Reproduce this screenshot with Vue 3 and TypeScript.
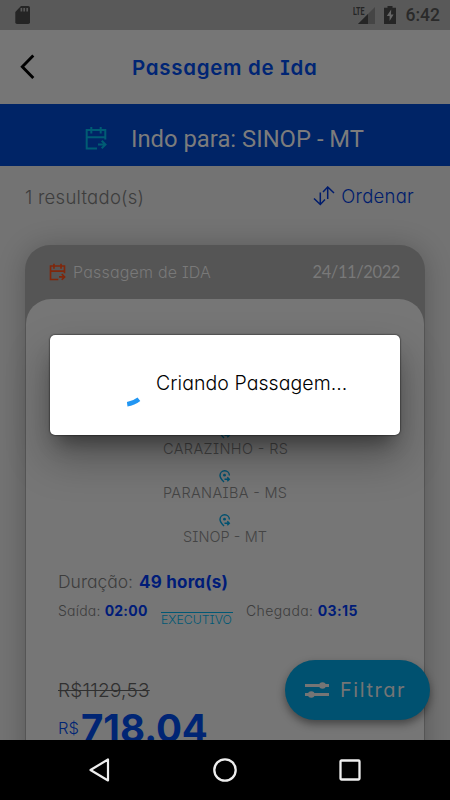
<script setup lang="ts">
interface Stop {
  id: number
  name: string
  width: number
}

const stops: Stop[] = [
  { id: 1, name: 'CARAZINHO - RS', width: 125 },
  { id: 2, name: 'PARANAIBA - MS', width: 124 },
  { id: 3, name: 'SINOP - MT', width: 84 },
]
</script>

<template>
  <div class="screen">
    <header class="status">
      <svg class="sd" width="16" height="18" viewBox="0 0 16 18">
        <path d="M6 0h7.2Q15 0 15 1.8v14.4Q15 18 13.200 18H2Q.3 18 .3 16.200V6Z" fill="#252525" />
        <path d="M6.400 2v3.600M9.200 2v3.600M12.200 2v3.600" stroke="#595959" stroke-width="1.700" />
      </svg>
      <div class="status-right">
        <svg width="23" height="19" viewBox="0 0 23 19">
          <text x="0" y="8.800" class="lte" textLength="11.500" lengthAdjust="spacingAndGlyphs">LTE</text>
          <path d="M22 1v17H5Z" fill="#454545" />
          <path d="M15 8v10H5Z" fill="#252525" />
        </svg>
        <svg class="battery" width="12" height="18" viewBox="0 0 12 18">
          <path d="M3.500 0h5v1.800H12V18H0V1.800h3.500Z" fill="#252525" />
          <path d="M7.200 3.600 2.800 10h2.800v5L9.600 8.400H7Z" fill="#666" />
        </svg>
        <span class="clock">6:42</span>
      </div>
    </header>

    <div class="appbar">
      <svg class="back" width="16" height="26" viewBox="0 0 16 26">
        <path d="M13.300 1.500 2.300 12.800l11 11.300" fill="none" stroke="#000" stroke-width="2.900" />
      </svg>
      <h1 class="title">Passagem de Ida</h1>
    </div>

    <div class="banner">
      <svg class="cal" width="22" height="25" viewBox="0 0 22 25">
        <g fill="none" stroke="currentColor" stroke-width="2">
          <path d="M12 22.500H1.700V4h18.600v9.500M1.700 11.300h18.600M6.300 1v6.500M15.700 1v6.500" />
          <path d="M13 18.500h7M16.700 14.700l3.800 3.800-3.800 3.800" />
        </g>
      </svg>
      <span class="banner-text">Indo para: SINOP - MT</span>
    </div>

    <main class="content">
      <div class="summary">
        <span class="count">1 resultado(s)</span>
        <div class="sort">
          <svg width="22" height="20" viewBox="0 0 22 20">
            <path d="M1 12.500 7.300 18.500 12 13.500M7.300 6.500v12M21 7 14.700 1 10 6M14.700 1v12" fill="none" stroke="#001c6c" stroke-width="1.500" />
          </svg>
          <span class="sort-text">Ordenar</span>
        </div>
      </div>

      <article class="card">
        <div class="card-head">
          <svg class="cal-small" width="17" height="18" viewBox="0 0 22 24">
            <g fill="none" stroke="currentColor" stroke-width="2.200">
              <path d="M12 22H1.700V4h18.600v9.500M1.700 10.800h18.600M6.300 1v6.500M15.700 1v6.500" />
              <path d="M13 18.500h7M16.700 14.700l3.800 3.800-3.800 3.800" />
            </g>
          </svg>
          <span class="kind">Passagem de IDA</span>
          <span class="date">24/11/2022</span>
        </div>
        <div class="card-body">
          <div class="stops">
            <div v-for="stop in stops" :key="stop.id" class="stop">
              <svg width="12" height="14" viewBox="0 0 12 14">
                <path d="M5 12C2.500 9.500 1 7.700 1 5.500a4.700 4.700 0 0 1 9.400 0M5.500 9.300h4.800M8.300 7.300l2 2-2 2" fill="none" stroke="#005170" stroke-width="1.400" />
                <circle cx="5.500" cy="5.200" r="1.400" fill="#005170" />
              </svg>
              <svg class="stop-name" :width="stop.width" height="18">
                <text x="0" y="14" :textLength="stop.width">{{ stop.name }}</text>
              </svg>
            </div>
          </div>
          <div class="duration">
            <span class="duration-label">Duração:</span><b>49 hora(s)</b>
          </div>
          <div class="times">
            <span class="leave">Saída: <b>02:00</b></span>
            <span class="class-tag">EXECUTIVO</span>
            <span class="arrive">Chegada: <b>03:15</b></span>
          </div>
          <div class="old-price">R$1129,53</div>
          <div class="price"><span class="currency">R$</span><span class="amount">718.04</span></div>
        </div>
      </article>
    </main>

    <button class="filter">
      <svg width="24" height="16" viewBox="0 0 24 16">
        <path d="M0 3.500h24M0 12.500h24" stroke="#757575" stroke-width="2.800" />
        <circle cx="17.500" cy="3.500" r="3.300" fill="#757575" />
        <circle cx="6.300" cy="12.500" r="3.300" fill="#757575" />
      </svg>
      <span>Filtrar</span>
    </button>

    <div class="dialog">
      <svg class="spinner" width="44" height="44" viewBox="0 0 44 44">
        <path d="M35.900 36.300A24 24 0 0 1 24.200 41.200" class="arc" />
      </svg>
      <span class="message">Criando Passagem...</span>
    </div>

    <nav class="nav">
      <svg width="22" height="26" viewBox="0 0 22 26">
        <path d="M19 2.500v21L1.500 13Z" fill="none" stroke="#eee" stroke-width="2.200" stroke-linejoin="round" />
      </svg>
      <svg width="26" height="26" viewBox="0 0 26 26">
        <circle cx="13" cy="13" r="10.700" fill="none" stroke="#eee" stroke-width="2.300" />
      </svg>
      <svg width="22" height="22" viewBox="0 0 22 22">
        <rect x="1.500" y="1.500" width="19" height="19" rx="1" fill="none" stroke="#eee" stroke-width="2.300" />
      </svg>
    </nav>
  </div>
</template>

<style>
body {
  margin: 0;
  background: #737373;
}
</style>

<style scoped>
.screen {
  position: relative;
  display: flex;
  flex-direction: column;
  width: 450px;
  height: 800px;
  overflow: hidden;
  background: #737373;
  font-family: Inter, "Open Sans", sans-serif;
  font-feature-settings: "cv11", "cv08";
  white-space: nowrap;
}
svg {
  display: block;
  flex: none;
}
.status {
  display: flex;
  justify-content: space-between;
  align-items: center;
  height: 30px;
  flex: none;
  box-sizing: border-box;
  padding: 0 10px 0 15px;
  background: #595959;
}
.status-right {
  display: flex;
  align-items: center;
}
.lte {
  font: 700 10.500px Roboto, sans-serif;
  fill: #252525;
}
.battery {
  margin-left: 8px;
}
.clock {
  margin-left: 10px;
  font: 500 17.500px/30px Roboto, sans-serif;
  color: #2a2a2a;
}
.appbar {
  display: flex;
  align-items: center;
  height: 74px;
  flex: none;
  box-sizing: border-box;
  padding-left: 20px;
  background: #767676;
}
.title {
  margin: 2px 0 0 96px;
  font-size: 20.500px;
  line-height: 26px;
  font-weight: 600;
  letter-spacing: 0.700px;
  color: #002574;
}
.banner {
  display: flex;
  align-items: center;
  height: 62px;
  flex: none;
  box-sizing: border-box;
  padding-left: 85px;
  background: #002466;
}
.cal {
  margin-top: 6px;
  color: #005c74;
}
.banner-text {
  margin: 7px 0 0 24px;
  font: 400 23.800px/30px Roboto, sans-serif;
  color: #7c7c7c;
}
.content {
  flex: 1;
  min-height: 0;
  overflow: hidden;
}
.summary {
  display: flex;
  align-items: center;
  justify-content: space-between;
  height: 62px;
  padding: 0 36px 0 25px;
}
.count {
  margin-top: -1px;
  font-size: 18.500px;
  font-weight: 300;
  letter-spacing: 0.260px;
  color: #3d3d3d;
}
.sort {
  display: flex;
  align-items: center;
  gap: 6px;
  margin-top: -2px;
}
.sort-text {
  font-size: 18.500px;
  letter-spacing: 0.250px;
  font-weight: 350;
  color: #001c6c;
}
.card {
  width: 400px;
  height: 600px;
  box-sizing: border-box;
  margin: 17px 25px 0;
  padding: 0 1px;
  border-radius: 25px;
  background: #555;
  box-shadow: 0 2px 28px rgba(0, 0, 0, 0.240);
}
.card-head {
  display: flex;
  align-items: center;
  height: 54px;
  padding: 0 24px 0 23px;
}
.cal-small {
  margin-top: -1px;
  color: #80270b;
}
.kind {
  margin-left: 7px;
  font-size: 16px;
  font-weight: 300;
  letter-spacing: 0.200px;
  color: #797979;
}
.date {
  margin: -1px 0 0 auto;
  font: 400 16.500px Lato, sans-serif;
  letter-spacing: -0.400px;
  color: #797979;
}
.card-body {
  height: 546px;
  box-sizing: border-box;
  padding: 127px 32px 0;
  border-radius: 25px;
  background: #767676;
}
.stops {
  display: flex;
  flex-direction: column;
  align-items: center;
}
.stop {
  display: flex;
  flex-direction: column;
  align-items: center;
  height: 44px;
}
.stop-name {
  overflow: visible;
  font-size: 14.500px;
  font-weight: 300;
  fill: #444;
}
.duration {
  display: flex;
  margin-top: 12px;
  font-size: 17.500px;
  line-height: 24px;
  font-weight: 300;
  color: #3d3d3d;
}
b {
  font-weight: 700;
  color: #001c78;
}
.duration b {
  margin-left: 6px;
  font-size: 17px;
  letter-spacing: 0.200px;
}
.times {
  display: flex;
  align-items: flex-start;
  height: 28px;
  margin-top: 5px;
  font-size: 14px;
  line-height: 24px;
  font-weight: 300;
  color: #3d3d3d;
}
.leave {
  width: 103px;
  letter-spacing: 0.200px;
}
.class-tag {
  width: 72px;
  box-sizing: border-box;
  margin-top: 13px;
  border-top: 1px solid #005875;
  font-size: 12.300px;
  line-height: 14px;
  color: #005875;
}
.arrive {
  margin-left: 13px;
  letter-spacing: 0.400px;
}
.old-price {
  width: max-content;
  margin-top: 50px;
  font-size: 19px;
  line-height: 28px;
  font-weight: 300;
  letter-spacing: 0.250px;
  color: #303030;
  text-decoration: line-through;
}
.price {
  display: flex;
  align-items: center;
  height: 46px;
  color: #002574;
}
.currency {
  margin-right: 2px;
  font-size: 16.500px;
  font-weight: 300;
}
.amount {
  font-size: 38.500px;
  font-weight: 700;
  line-height: 44px;
}
.filter {
  position: absolute;
  left: 285px;
  top: 660px;
  display: flex;
  align-items: center;
  gap: 11px;
  width: 145px;
  height: 60px;
  padding: 0 0 0 20px;
  border: 0;
  border-radius: 30px;
  background: #005170;
  box-shadow: 0 4px 9px rgba(0, 0, 0, 0.420);
  font: 400 20px Inter, sans-serif;
  font-feature-settings: "cv11";
  letter-spacing: 1.550px;
  color: #757575;
}
.dialog {
  position: absolute;
  left: 50px;
  top: 335px;
  display: flex;
  align-items: center;
  width: 350px;
  height: 100px;
  border-radius: 5px;
  background: #fff;
  box-shadow: 0 14px 19px -8px rgba(0, 0, 0, 0.400), 0 22px 42px 2px rgba(0, 0, 0, 0.280), 0 0 2px #000;
}
.spinner {
  margin: 0 0 0 53px;
  overflow: visible;
}
.arc {
  fill: none;
  stroke: #2196f3;
  stroke-width: 4.500;
}
.message {
  margin: -4px 0 0 9px;
  font-size: 19.500px;
  font-weight: 300;
  letter-spacing: 0.060px;
  color: #000;
}
.nav {
  position: relative;
  display: flex;
  align-items: center;
  justify-content: center;
  gap: 101px;
  height: 60px;
  flex: none;
  background: #000;
}
</style>
